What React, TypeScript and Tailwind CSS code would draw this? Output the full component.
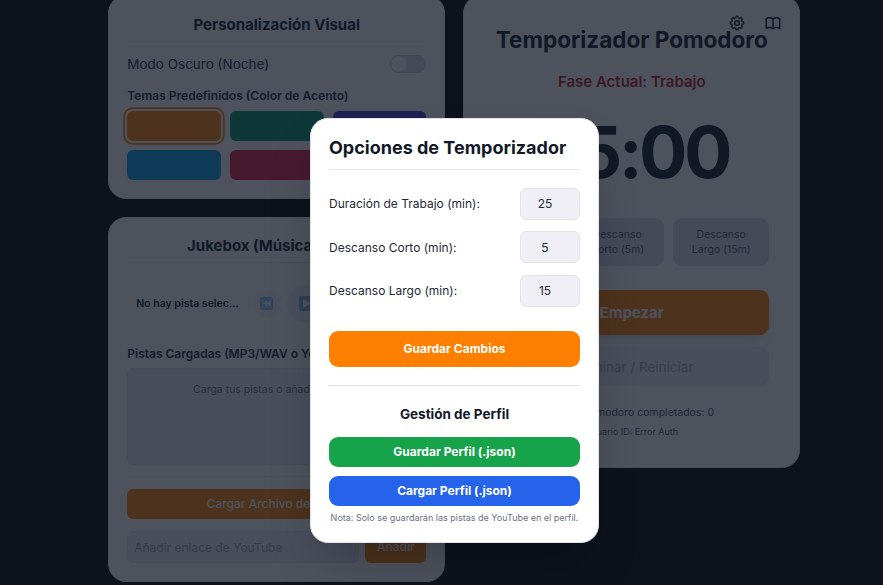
import type { ReactNode } from "react";

const card = "bg-white border border-[#eeedf4] rounded-[18px]";

function Heading({ children }: { children: ReactNode }) {
  return (
    <h2 className="border-b border-[#e6e5ee] pb-1.5 text-center text-[15px] leading-[21px] font-bold text-[#111827]">
      {children}
    </h2>
  );
}

function GearIcon() {
  return (
    <svg className="size-[18px]" viewBox="0 0 24 24" fill="none" stroke="currentColor" strokeWidth="2" strokeLinecap="round" strokeLinejoin="round">
      <path d="M10.325 4.317c.426-1.756 2.924-1.756 3.35 0a1.724 1.724 0 002.573 1.066c1.543-.94 3.31.826 2.37 2.37a1.724 1.724 0 001.065 2.572c1.756.426 1.756 2.924 0 3.35a1.724 1.724 0 00-1.066 2.573c.94 1.543-.826 3.31-2.37 2.37a1.724 1.724 0 00-2.572 1.065c-.426 1.756-2.924 1.756-3.35 0a1.724 1.724 0 00-2.573-1.066c-1.543.94-3.31-.826-2.37-2.37a1.724 1.724 0 00-1.065-2.572c-1.756-.426-1.756-2.924 0-3.35a1.724 1.724 0 001.066-2.573c-.94-1.543.826-3.31 2.37-2.37.996.608 2.296.07 2.572-1.065z" />
      <circle cx="12" cy="12" r="3" />
    </svg>
  );
}

function BookIcon() {
  return (
    <svg className="size-[18px]" viewBox="0 0 24 24" fill="none" stroke="currentColor" strokeWidth="2" strokeLinecap="round" strokeLinejoin="round">
      <path d="M12 6.253v13m0-13C10.832 5.477 9.246 5 7.5 5S4.168 5.477 3 6.253v13C4.168 18.477 5.754 18 7.5 18s3.332.477 4.5 1.253m0-13C13.168 5.477 14.754 5 16.5 5c1.747 0 3.332.477 4.5 1.253v13C19.832 18.477 18.247 18 16.5 18c-1.746 0-3.332.477-4.5 1.253" />
    </svg>
  );
}

function Appearance() {
  return (
    <section className={`${card} -mt-[5px] px-4.5 pt-[17.5px] pb-[18px]`}>
      <Heading>Personalización Visual</Heading>
      <div className="mt-3 flex items-center justify-between">
        <span className="text-[13.5px] leading-[21px] text-[#1f2937]">Modo Oscuro (Noche)</span>
        <span className="flex h-[18px] w-9 items-center rounded-full border border-[#cfcddd] bg-[#d9d8e5]">
          <span className="size-4 rounded-full bg-white" />
        </span>
      </div>
      <p className="mt-3 text-[12.05px] leading-[18px] font-semibold text-[#1f2937]">Temas Predefinidos (Color de Acento)</p>
      <div className="mt-[6px] grid grid-cols-3 gap-[9px]">
        <span className="h-[30px] rounded-[6px] bg-[#ff8000] shadow-[0_0_0_2px_#ffffff,0_0_0_3.75px_#ff8000]" />
        <span className="h-[30px] rounded-[6px] bg-[#059669]" />
        <span className="h-[30px] rounded-[6px] bg-[#4338ca]" />
        <span className="h-[30px] rounded-[6px] bg-[#0ea5e9]" />
        <span className="h-[30px] rounded-[6px] bg-[#e11d48]" />
        <span className="h-[30px] rounded-[6px] bg-[#6b7280]" />
      </div>
    </section>
  );
}

function Jukebox() {
  return (
    <section className={`${card} px-4.5 pt-[17px] pb-[18px]`}>
      <Heading>Jukebox (Música/Audio)</Heading>
      <div className="mt-3 flex h-[58px] items-center px-[9px]">
        <span className="w-[104px] pt-px text-[10.5px] font-semibold whitespace-nowrap text-[#111827]">No hay pista selec...</span>
        <span className="ml-[12.5px] flex size-[27px] items-center justify-center rounded-full bg-[#f6f6fb]">
          <svg className="size-[13px] opacity-50" viewBox="0 0 13 13">
            <rect width="13" height="13" rx="1.5" fill="#3b97e3" />
            <path d="M2.5 3.5v6M7 3.5v6L3.5 6.5zM10.8 3.5v6L7 6.5z" fill="#fff" stroke="#fff" strokeWidth=".5" />
          </svg>
        </span>
        <span className="ml-[7.5px] flex size-[38px] items-center justify-center rounded-full bg-[#f3f3f9]">
          <svg className="size-[15px] opacity-60" viewBox="0 0 15 15">
            <rect width="15" height="15" rx="2" fill="#2b8be0" />
            <path d="M4 3l8 4.5L4 12z" fill="#fff" />
          </svg>
        </span>
      </div>
      <p className="mt-[12px] text-[12px] leading-[18px] font-semibold text-[#1f2937]">Pistas Cargadas (MP3/WAV o YouTube)</p>
      <div className="mt-[5px] h-[97px] rounded-[6px] border border-[#e6e5ee] bg-[#f0eff5] pt-[13px] text-center text-[10.5px] leading-[15px] text-[#6b7280]">
        Carga tus pistas o añade enlaces.
      </div>
      <div className="mt-[11px] border-t border-[#eeedf4] pt-3">
        <button className="h-[30px] w-full rounded-[6px] bg-[#ff8000] pt-px text-[12px] font-medium text-white">Cargar Archivo de Audio</button>
        <div className="mt-3 flex gap-[6px]">
          <input className="h-8 min-w-0 flex-1 rounded-[6px] border border-[#e6e5ee] bg-[#f0eff5] px-[6px] pt-px text-[12px] placeholder:text-[#9ca3af]" placeholder="Añadir enlace de YouTube" />
          <button className="w-[61px] rounded-[6px] bg-[#ff8000] pt-px text-[12px] font-medium text-white">Añadir</button>
        </div>
      </div>
    </section>
  );
}

function Pomodoro() {
  const mode = "flex h-12 items-center justify-center rounded-[9px] bg-[#e0e0ef] text-center text-[10.5px] leading-[15px] text-[#4b5563]";
  return (
    <section className={`${card} relative -mt-[5px] h-[473px] px-[30px] pt-[30px] text-center`}>
      <div className="absolute top-[18px] right-[17.5px] flex gap-[18px] text-[#111827]">
        <GearIcon />
        <BookIcon />
      </div>
      <h1 className="text-[22.5px] leading-[27px] font-bold whitespace-nowrap text-[#111827]">Temporizador Pomodoro</h1>
      <p className="mt-[18px] text-[15px] leading-[21px] font-semibold text-[#b91c1c]">Fase Actual: Trabajo</p>
      <div className="mt-[24px] text-[72px] leading-[72px] font-bold tracking-tighter text-[#111827]">25:00</div>
      <div className="mt-[30px] grid grid-cols-[67px_94px_96px] gap-[9px]">
        <span className={mode}>Trabajo<br />(25m)</span>
        <span className={mode}>Descanso<br />Corto (5m)</span>
        <span className={mode}>Descanso<br />Largo (15m)</span>
      </div>
      <button className="mt-6 h-[45px] w-full rounded-[9px] bg-[#ff8000] pt-px text-[15px] font-bold text-white shadow-lg">Empezar</button>
      <button className="mt-3 h-[39px] w-full rounded-[9px] bg-[#efeef6] pt-px text-[13.5px] text-[#a5a8b3]">Terminar / Reiniciar</button>
      <p className="mt-[19px] text-[10.5px] leading-[15px] text-[#4b5563]">Ciclos Pomodoro completados: 0</p>
      <p className="mt-[6px] text-[9px] leading-[12px] text-[#4b5563]">Usuario ID: Error Auth</p>
    </section>
  );
}

function NumberRow({ label, value }: { label: string; value: number }) {
  return (
    <label className="flex items-center justify-between text-[12px] text-[#1f2937]">
      <span className="pt-[1.5px]">{label}</span>
      <span className="flex h-8 w-[60px] items-center rounded-[6px] border border-[#e3e1ea] bg-[#f0eff5] pt-[1.5px] pr-[10px]">
        <span className="flex-1 text-center">{value}</span>
      </span>
    </label>
  );
}

function TimerOptions() {
  const action = "w-full rounded-[9px] pt-[1.5px] text-[12px] font-bold text-white";
  return (
    <div className="h-[425px] w-[289px] rounded-[18px] border border-[#e4e2ee] bg-white px-[18px] pt-[17px] shadow-2xl">
      <h3 className="border-b border-[#e5e7eb] pb-[9px] text-[18px] leading-[24px] font-bold text-[#111827]">Opciones de Temporizador</h3>
      <div className="mt-[18px] flex flex-col gap-[11.5px]">
        <NumberRow label="Duración de Trabajo (min):" value={25} />
        <NumberRow label="Descanso Corto (min):" value={5} />
        <NumberRow label="Descanso Largo (min):" value={15} />
      </div>
      <button className={`${action} mt-6 h-9 bg-[#ff8000]`}>Guardar Cambios</button>
      <div className="mt-[18px] border-t border-[#e0deea] pt-[18px] text-center">
        <h4 className="text-[13.5px] leading-[21px] font-bold text-[#111827]">Gestión de Perfil</h4>
        <button className={`${action} mt-3 h-[30px] bg-[#16a34a]`}>Guardar Perfil (.json)</button>
        <button className={`${action} mt-[9px] h-[30px] bg-[#2563eb]`}>Cargar Perfil (.json)</button>
        <p className="mt-[6px] text-[9px] leading-[12px] whitespace-nowrap text-[#6b7280]">Nota: Solo se guardarán las pistas de YouTube en el perfil.</p>
      </div>
    </div>
  );
}

export default function App() {
  return (
    <div className="relative h-[585px] w-[883px] overflow-hidden bg-[#000000] font-[Inter,sans-serif]">
      <main className="ml-[108.25px] grid w-[692px] grid-cols-2 items-start gap-[18px]">
        <div className="flex flex-col gap-[18px]">
          <Appearance />
          <Jukebox />
        </div>
        <Pomodoro />
      </main>
      <div className="absolute inset-0 flex items-start justify-center bg-[#111827]/75 pt-[117.5px] pl-[26px]">
        <TimerOptions />
      </div>
    </div>
  );
}
